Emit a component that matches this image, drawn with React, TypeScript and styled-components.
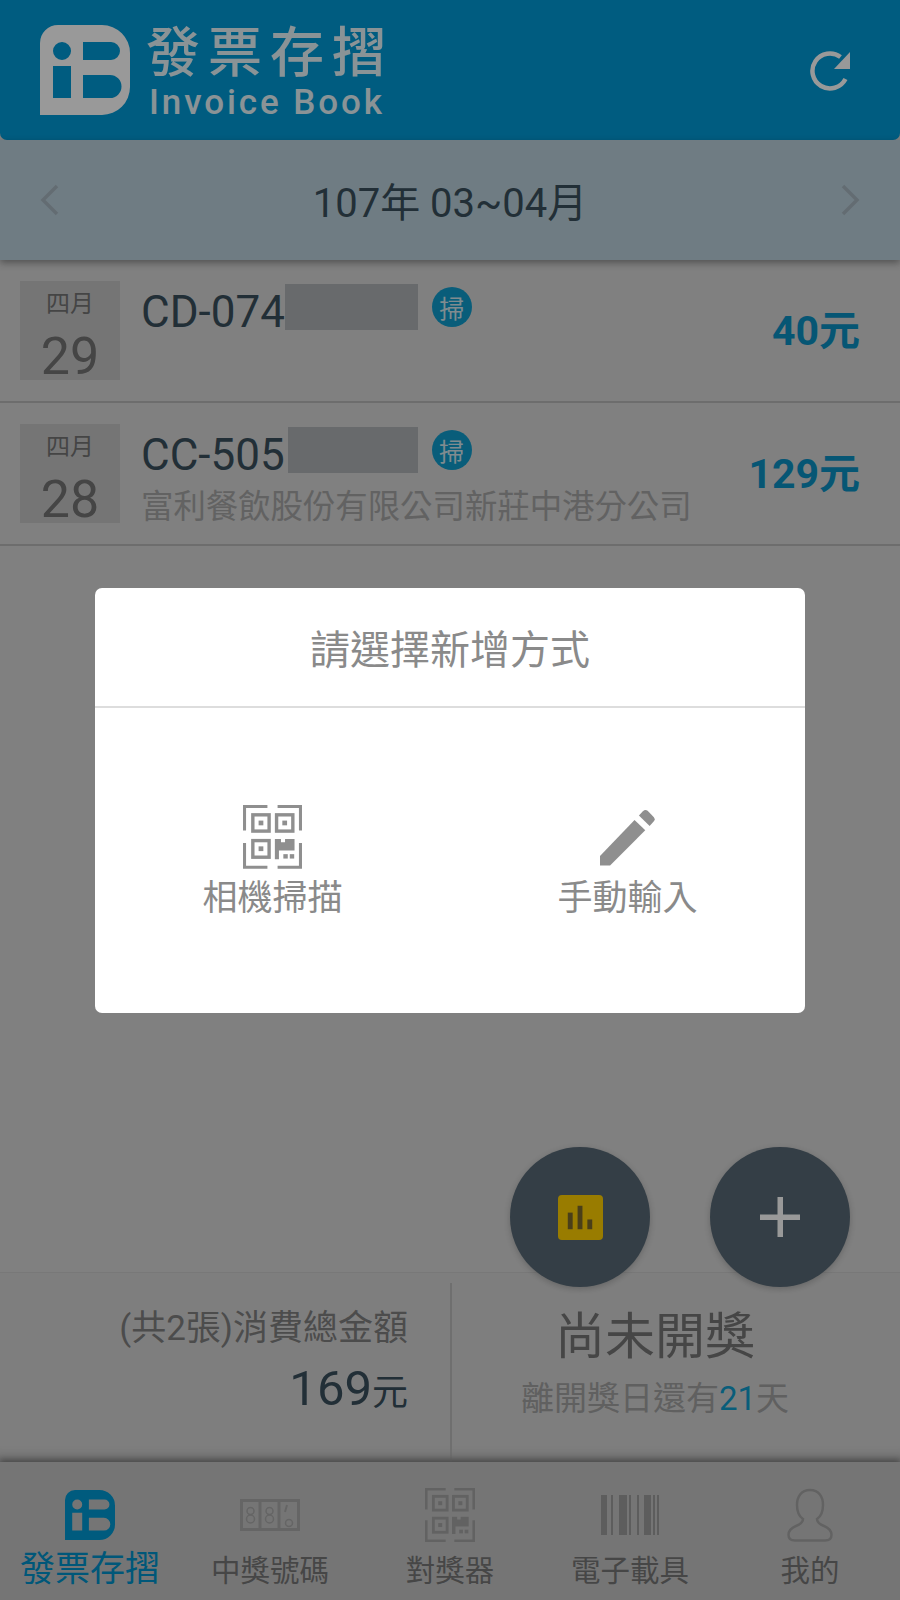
import { createGlobalStyle, styled } from 'styled-components';

const GlobalStyle = createGlobalStyle`
  html, body {
    margin: 0;
    padding: 0;
    background: #d5d5d5;
  }
  * {
    box-sizing: border-box;
  }
  body {
    font-family: Roboto, "Noto Sans CJK TC", sans-serif;
  }
`;

const invoices = [
  { month: '四月', day: 29, code: 'CD-074', hiddenGap: 0, hidden: 133, amount: '40元', shop: '' },
  { month: '四月', day: 28, code: 'CC-505', hiddenGap: 3, hidden: 130, amount: '129元', shop: '富利餐飲股份有限公司新莊中港分公司' },
];

const BookLogo = ({ size, color }: { size: number; color: string }) => (
  <svg width={size} height={size} viewBox="0 0 90 90">
    <path
      fillRule="evenodd"
      fill={color}
      d="M18 0H62A28 28 0 0 1 90 28V62A28 28 0 0 1 62 90H0V18A18 18 0 0 1 18 0ZM22 17A9 9 0 1 0 22.01 35A9 9 0 1 0 22 17ZM13 41V73H31V41ZM43 17V35H71A9 9 0 0 0 71 17ZM43 50V73H70A11.5 11.5 0 0 0 70 50Z"
    />
  </svg>
);

const QrIcon = ({ width, color }: { width: number; color: string }) => (
  <svg width={width} viewBox="0 0 174 188" fill="none" stroke={color}>
    <path strokeWidth="9" d="M4.5 75V4.5H72M102 4.5H169.5V75M4.5 112V183.5H72M102 183.5H169.5V112" />
    <g strokeWidth="10">
      <rect x="29" y="29" width="48" height="48" />
      <rect x="99" y="29" width="48" height="48" />
      <rect x="29" y="105" width="48" height="49" />
    </g>
    <g fill={color} stroke="none">
      <rect x="46" y="46" width="14" height="14" />
      <rect x="116" y="46" width="14" height="14" />
      <rect x="46" y="122" width="14" height="14" />
      <path d="M94 100H112V110H124V100H152V134H106V160H94Z" />
      <rect x="119" y="145" width="13" height="13" />
      <rect x="138" y="145" width="13" height="13" />
    </g>
  </svg>
);

const PencilIcon = () => (
  <svg width="55" height="57" viewBox="0 0 164 169" fill="#8f8f8f">
    <path d="M0 168V140L103 32L135 63L30 168Z" />
    <path d="M116 19L128 6Q135 -1 142 5L160 23Q166 30 160 37L148 50Z" />
  </svg>
);

const RefreshIcon = () => (
  <svg width="42" height="42" viewBox="0 0 42 42" fill="none">
    <path d="M35.5 28A17.5 17.5 0 1 1 30.5 6" stroke="#ffffff" strokeWidth="4.5" />
    <path d="M40 1V18H24Z" fill="#ffffff" />
  </svg>
);

const Chevron = ({ dir }: { dir: 'left' | 'right' }) => (
  <svg width="20" height="32" viewBox="0 0 20 32" fill="none">
    <path
      d={dir === 'left' ? 'M17 2L3 16L17 30' : 'M3 2L17 16L3 30'}
      stroke="#a5b5bf"
      strokeWidth="3.5"
    />
  </svg>
);

const StatsIcon = () => (
  <svg width="45" height="45" viewBox="0 0 46 46">
    <rect width="46" height="46" rx="4" fill="#ffcf00" />
    <g fill="#7c6a2a">
      <rect x="10" y="18" width="5" height="17" />
      <rect x="20" y="11" width="5" height="24" />
      <rect x="30" y="25" width="5" height="10" />
    </g>
  </svg>
);

const PlusIcon = () => (
  <svg width="40" height="40" viewBox="0 0 40 40" fill="#ffffff">
    <rect x="17.5" width="5.5" height="40" />
    <rect y="17.5" width="40" height="5.5" />
  </svg>
);

const LotteryIcon = () => (
  <svg width="60" height="32" viewBox="0 0 60 32" fill="none" stroke="#a8a8a8">
    <rect x="1.5" y="1.5" width="57" height="29" strokeWidth="3" />
    <path d="M20 1V31M39 1V31" strokeWidth="3" />
    <g strokeWidth="1.5">
      <circle cx="10.5" cy="12" r="3.5" />
      <circle cx="10.5" cy="20" r="4" />
      <circle cx="29.5" cy="12" r="3.5" />
      <circle cx="29.5" cy="20" r="4" />
      <circle cx="49" cy="24" r="3.5" />
      <path d="M47 6L45 13" strokeWidth="2" />
    </g>
  </svg>
);

const BarcodeIcon = () => (
  <svg width="58" height="40" viewBox="0 0 58 40" fill="#9c9c9c">
    <rect x="0" width="6" height="40" />
    <rect x="10" width="2" height="40" />
    <rect x="18" width="8" height="40" />
    <rect x="28" width="2" height="40" />
    <rect x="36" width="2" height="40" />
    <rect x="43" width="7" height="40" />
    <rect x="52" width="2" height="40" />
    <rect x="56" width="2" height="40" />
  </svg>
);

const PersonIcon = () => (
  <svg width="46" height="54" viewBox="0 0 46 54" fill="none" stroke="#a4a4a4" strokeWidth="2.5">
    <path d="M23 2C14 2 10 9 10 17C10 24 13 29 16 31C16 34 14 36 9 38C4 40 1.5 43 1.5 47C1.5 51 4 52.5 8 52.5H38C42 52.5 44.5 51 44.5 47C44.5 43 42 40 37 38C32 36 30 34 30 31C33 29 36 24 36 17C36 9 32 2 23 2Z" />
  </svg>
);

const App = () => {
  return (
    <Page>
      <GlobalStyle />
      <Header>
        <Brand>
          <BookLogo size={90} color="#ffffff" />
          <BrandText>
            <BrandTitle>發票存摺</BrandTitle>
            <BrandSub>Invoice Book</BrandSub>
          </BrandText>
        </Brand>
        <RefreshButton>
          <RefreshIcon />
        </RefreshButton>
      </Header>

      <PeriodBar>
        <Chevron dir="left" />
        <PeriodText>107年 03~04月</PeriodText>
        <Chevron dir="right" />
      </PeriodBar>

      <List>
        {invoices.map((item) => (
          <Row key={item.code}>
            <DateBox>
              <Month>{item.month}</Month>
              <Day>{item.day}</Day>
            </DateBox>
            <RowBody>
              <CodeLine>
                <Code>{item.code}</Code>
                <Hidden $gap={item.hiddenGap} $width={item.hidden} />
                <Badge>掃</Badge>
              </CodeLine>
              {item.shop && <Shop>{item.shop}</Shop>}
            </RowBody>
            <Amount>{item.amount}</Amount>
          </Row>
        ))}
      </List>

      <Summary>
        <TotalCell>
          <TotalLabel>(共2張)消費總金額</TotalLabel>
          <TotalValue>
            169<small>元</small>
          </TotalValue>
        </TotalCell>
        <DrawCell>
          <DrawTitle>尚未開獎</DrawTitle>
          <DrawNote>
            離開獎日還有<b>21</b>天
          </DrawNote>
        </DrawCell>
      </Summary>

      <BottomNav>
        <NavItem>
          <NavIcon>
            <BookLogo size={50} color="#0098d2" />
          </NavIcon>
          <NavLabel $active>發票存摺</NavLabel>
        </NavItem>
        <NavItem>
          <NavIcon>
            <LotteryIcon />
          </NavIcon>
          <NavLabel>中獎號碼</NavLabel>
        </NavItem>
        <NavItem>
          <NavIcon>
            <QrIcon width={50} color="#a4a4a4" />
          </NavIcon>
          <NavLabel>對獎器</NavLabel>
        </NavItem>
        <NavItem>
          <NavIcon>
            <BarcodeIcon />
          </NavIcon>
          <NavLabel>電子載具</NavLabel>
        </NavItem>
        <NavItem>
          <NavIcon>
            <PersonIcon />
          </NavIcon>
          <NavLabel>我的</NavLabel>
        </NavItem>
      </BottomNav>

      <FabGroup>
        <Fab>
          <StatsIcon />
        </Fab>
        <Fab>
          <PlusIcon />
        </Fab>
      </FabGroup>

      <Overlay>
        <Dialog>
          <DialogTitle>請選擇新增方式</DialogTitle>
          <DialogBody>
            <Option>
              <OptionIcon>
                <QrIcon width={59} color="#8f8f8f" />
              </OptionIcon>
              <OptionLabel>相機掃描</OptionLabel>
            </Option>
            <Option>
              <OptionIcon>
                <PencilIcon />
              </OptionIcon>
              <OptionLabel>手動輸入</OptionLabel>
            </Option>
          </DialogBody>
        </Dialog>
      </Overlay>
    </Page>
  );
};

export default App;

const Page = styled.div`
  position: relative;
  width: 900px;
  height: 1600px;
  display: flex;
  flex-direction: column;
  overflow: hidden;
  background: #d5d5d5;
`;

const Header = styled.header`
  height: 140px;
  flex-shrink: 0;
  display: flex;
  align-items: center;
  justify-content: space-between;
  padding: 0 48px 0 40px;
  background: #0099d5;
  border-radius: 0 0 7px 7px;
`;

const RefreshButton = styled.div`
  display: flex;
  padding-top: 3px;
`;

const Brand = styled.div`
  display: flex;
  align-items: center;
  gap: 16px;
`;

const BrandText = styled.div`
  display: flex;
  flex-direction: column;
  padding-top: 4px;
`;

const BrandTitle = styled.div`
  font-size: 54px;
  line-height: 62px;
  font-weight: 500;
  letter-spacing: 8px;
  color: #e6f6fb;
`;

const BrandSub = styled.div`
  font-family: Roboto, sans-serif;
  font-size: 35px;
  line-height: 36px;
  font-weight: 500;
  letter-spacing: 2.9px;
  margin-left: 3px;
  color: #e6f6fb;
`;

const PeriodBar = styled.div`
  height: 120px;
  flex-shrink: 0;
  display: flex;
  align-items: center;
  justify-content: space-between;
  padding: 0 40px;
  background: #b9cfda;
  box-shadow: 0 3px 7px rgba(0, 0, 0, 0.35);
  position: relative;
`;

const PeriodText = styled.div`
  font-size: 40px;
  color: #3a4f5c;
`;

const List = styled.main`
  flex: 1;
`;

const Row = styled.div`
  display: flex;
  gap: 21px;
  padding: 21px 40px 21px 20px;
  border-bottom: 2px solid #b6b6b6;
`;

const DateBox = styled.div`
  width: 100px;
  height: 99px;
  flex-shrink: 0;
  display: flex;
  flex-direction: column;
  align-items: center;
  background: #c4c4c4;
  color: #737373;
`;

const Month = styled.div`
  font-size: 24px;
  line-height: 24px;
  margin-top: 11px;
`;

const Day = styled.div`
  font-size: 52px;
  line-height: 56px;
  margin-top: 13px;
`;

const RowBody = styled.div`
  flex: 1;
  height: 99px;
  display: flex;
  flex-direction: column;
`;

const CodeLine = styled.div`
  display: flex;
  align-items: center;
  height: 52px;
`;

const Code = styled.span`
  font-size: 44px;
  line-height: 52px;
  padding-top: 9px;
  color: #3a4f5c;
`;

const Hidden = styled.span<{ $gap: number; $width: number }>`
  width: ${({ $width }) => $width}px;
  height: 46px;
  margin-left: ${({ $gap }) => $gap}px;
  background: #adb1b4;
`;

const Badge = styled.span`
  width: 40px;
  height: 40px;
  margin-left: 14px;
  border-radius: 50%;
  display: flex;
  align-items: center;
  justify-content: center;
  font-size: 25px;
  color: #d5e8ee;
  background: #0f9ccc;
`;

const Shop = styled.div`
  font-size: 32.4px;
  line-height: 40px;
  margin-top: 11px;
  white-space: nowrap;
  color: #a3a3a3;
`;

const Amount = styled.div`
  align-self: center;
  margin-bottom: 7px;
  font-size: 41px;
  font-weight: 700;
  color: #0a8fc2;
  white-space: nowrap;
`;

const Summary = styled.section`
  height: 190px;
  flex-shrink: 0;
  display: grid;
  grid-template-columns: 452px 1fr;
  background: #d3d3d3;
  border-top: 1px solid #c8c8c8;
  box-shadow: inset 0 -18px 14px -14px rgba(0, 0, 0, 0.2);
`;

const TotalCell = styled.div`
  display: flex;
  flex-direction: column;
  align-items: flex-end;
  padding: 24px 42px 0 0;
  border-right: 2px solid #b9b9b9;
  margin-top: 10px;
`;

const TotalLabel = styled.div`
  font-size: 35px;
  line-height: 44px;
  color: #7f7f7f;
`;

const TotalValue = styled.div`
  font-size: 49px;
  line-height: 66px;
  margin-top: 5px;
  color: #3a4f5c;

  small {
    font-size: 36px;
  }
`;

const DrawCell = styled.div`
  display: flex;
  flex-direction: column;
  align-items: center;
  padding: 32px 42px 0 0;
`;

const DrawTitle = styled.div`
  font-size: 50px;
  line-height: 64px;
  color: #767676;
`;

const DrawNote = styled.div`
  font-size: 33px;
  line-height: 44px;
  margin-top: 8px;
  color: #a0a0a0;

  b {
    font-weight: 400;
    color: #0f9ccc;
  }
`;

const BottomNav = styled.nav`
  height: 138px;
  flex-shrink: 0;
  display: grid;
  grid-template-columns: repeat(5, 1fr);
  background: #c4c4c4;
  box-shadow: 0 -3px 6px rgba(0, 0, 0, 0.3);
  position: relative;
`;

const NavItem = styled.div`
  display: flex;
  flex-direction: column;
  align-items: center;
  padding-top: 26px;
`;

const NavIcon = styled.div`
  height: 54px;
  display: flex;
  align-items: center;
  justify-content: center;
`;

const NavLabel = styled.div<{ $active?: boolean }>`
  font-size: ${({ $active }) => ($active ? '35px' : '29.5px')};
  line-height: 44px;
  margin-top: ${({ $active }) => ($active ? '6px' : '7px')};
  color: ${({ $active }) => ($active ? '#0092ca' : '#767676')};
`;

const FabGroup = styled.div`
  position: absolute;
  top: 1147px;
  right: 50px;
  display: flex;
  gap: 60px;
`;

const Fab = styled.div`
  width: 140px;
  height: 140px;
  border-radius: 50%;
  display: flex;
  align-items: center;
  justify-content: center;
  background: #576875;
  box-shadow: 0 2px 6px rgba(0, 0, 0, 0.2);
`;

const Overlay = styled.div`
  position: absolute;
  inset: 0;
  display: flex;
  justify-content: center;
  align-items: flex-start;
  padding-top: 588px;
  background: rgba(0, 0, 0, 0.4);
`;

const Dialog = styled.div`
  width: 710px;
  height: 425px;
  display: flex;
  flex-direction: column;
  background: #ffffff;
  border-radius: 7px;
`;

const DialogTitle = styled.div`
  height: 120px;
  flex-shrink: 0;
  display: flex;
  align-items: center;
  justify-content: center;
  font-size: 40px;
  color: #8a8a8a;
  border-bottom: 2px solid #dddddd;
`;

const DialogBody = styled.div`
  flex: 1;
  display: grid;
  grid-template-columns: 1fr 1fr;
  align-items: center;
  padding-top: 7px;
`;

const Option = styled.div`
  display: flex;
  flex-direction: column;
  align-items: center;
`;

const OptionIcon = styled.div`
  height: 62px;
  display: flex;
  align-items: center;
  justify-content: center;
`;

const OptionLabel = styled.div`
  font-size: 35px;
  line-height: 46px;
  margin-top: 8px;
  color: #8a8a8a;
`;
